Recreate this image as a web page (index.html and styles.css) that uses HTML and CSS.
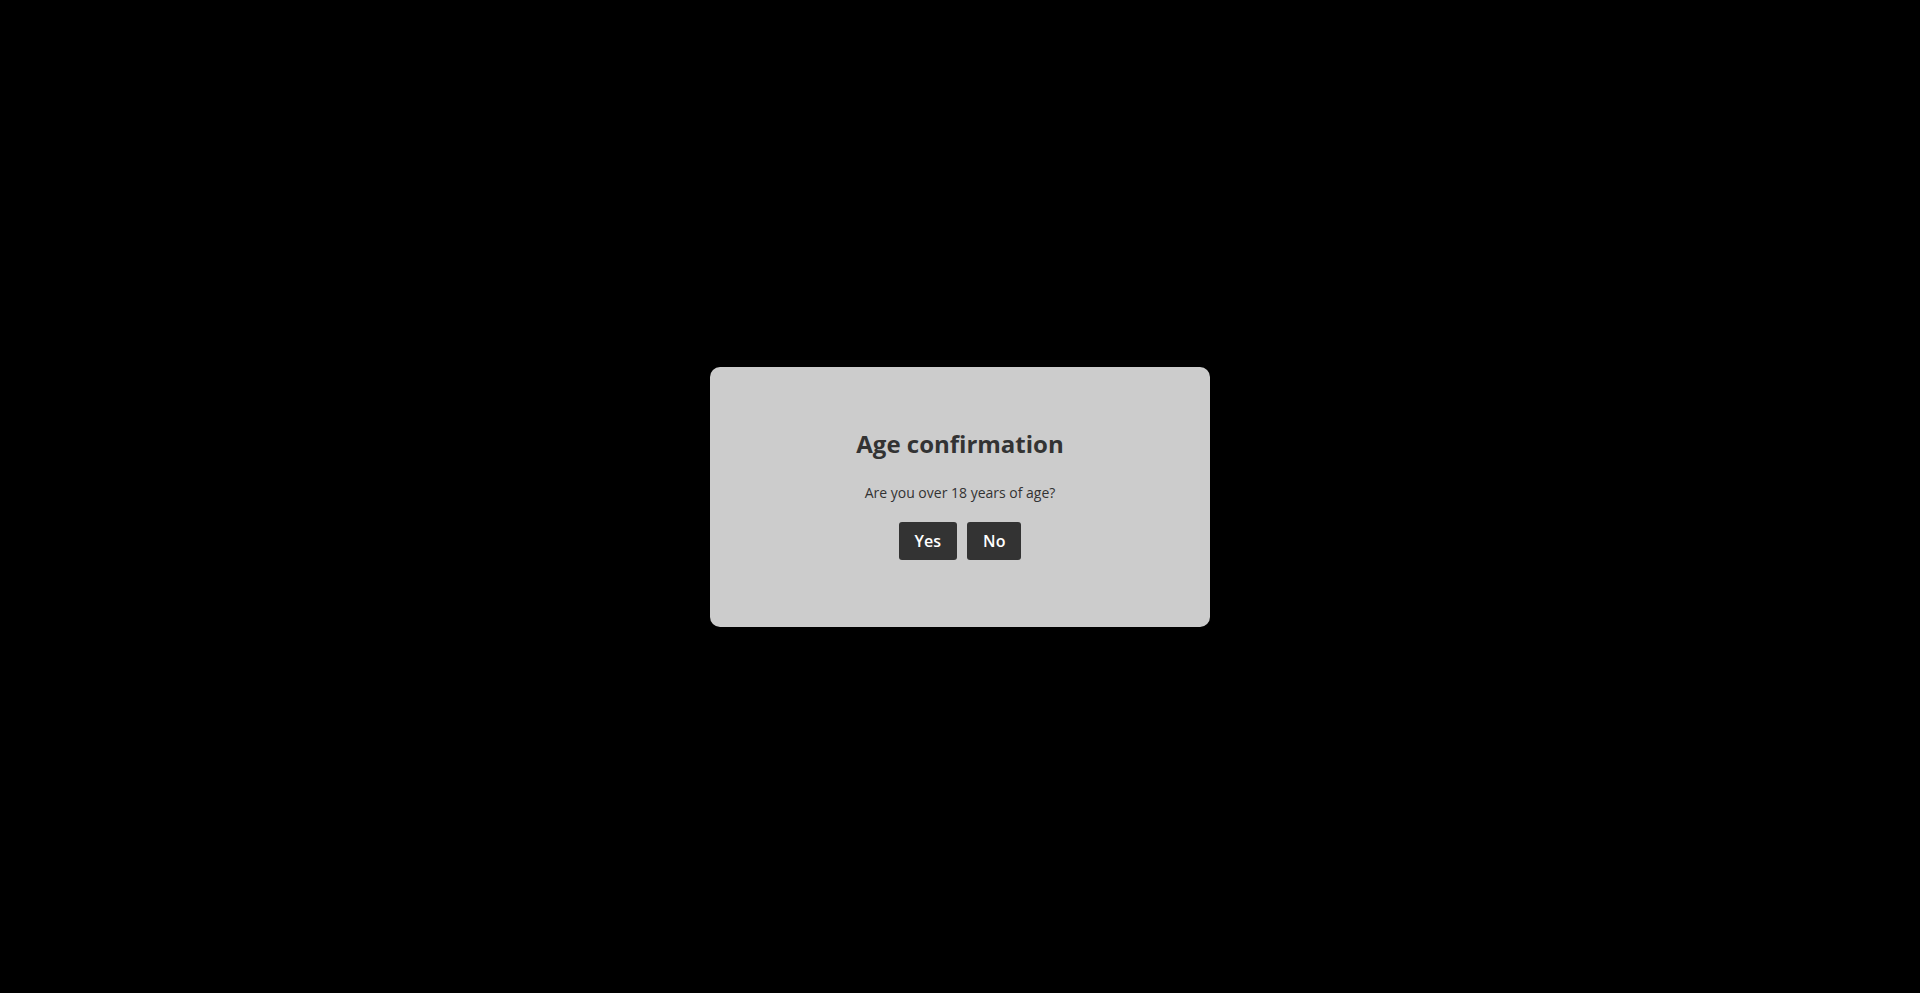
FILE: index.html
```html
<!DOCTYPE html>
<html lang="en">
<head>
    <meta charset="UTF-8">
    <meta name="viewport" content="width=device-width, initial-scale=1.0">
    <title>Age confirmation</title>
    <link rel="stylesheet" href="styles.css">
</head>
<body>
    <main class="overlay">
        <div class="modal" role="dialog" aria-labelledby="modal-title" aria-describedby="modal-text">
            <h2 class="modal-title" id="modal-title">Age confirmation</h2>
            <p class="modal-text" id="modal-text">Are you over 18 years of age?</p>
            <div class="modal-actions">
                <button class="btn" type="button">Yes</button>
                <button class="btn" type="button">No</button>
            </div>
        </div>
    </main>
</body>
</html>
```

FILE: styles.css
```css
* {
    margin: 0;
    padding: 0;
    box-sizing: border-box;
}

body {
    font-family: 'Open Sans', sans-serif;
    font-size: 14px;
    line-height: 20px;
    background: #000;
    color: #333;
}

.overlay {
    display: flex;
    align-items: center;
    justify-content: center;
    min-height: 100vh;
    padding: 20px;
}

.modal {
    width: 100%;
    max-width: 500px;
    padding: 60px 20px 67px;
    background: #ccc;
    border-radius: 10px;
    text-align: center;
}

.modal-title {
    margin-bottom: 22px;
    font-size: 24px;
    font-weight: 700;
    line-height: 34px;
}

.modal-text {
    margin-bottom: 19px;
}

.modal-actions {
    display: flex;
    justify-content: center;
    gap: 10px;
}

.btn {
    padding: 8px 16px;
    border: none;
    border-radius: 3px;
    background: #333;
    color: #fff;
    font-family: inherit;
    font-size: 16px;
    font-weight: 600;
    line-height: 22px;
    cursor: pointer;
}

.btn:hover {
    background: #555;
}
```
